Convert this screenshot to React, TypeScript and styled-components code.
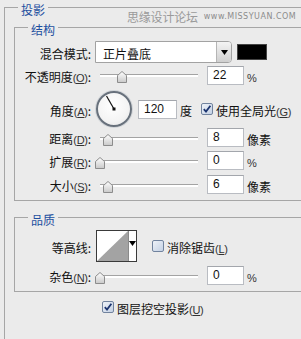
import React from "react";
import styled, { createGlobalStyle, css } from "styled-components";

const Global = createGlobalStyle`
  html, body { margin: 0; padding: 0; background: #ebebeb; }
  body {
    font-family: "Noto Sans CJK SC", "Noto Sans", sans-serif;
    font-size: 12px;
    color: #111;
  }
`;

/* CJK glyphs of the fallback face sit high in their line box: push them down a little */
const cjkText = css`
  line-height: 14px;
  padding-top: 4px;
  white-space: nowrap;
`;

const Panel = styled.div`
  position: relative;
  width: 301px;
  height: 339px;
  overflow: hidden;
  background: #ebebeb;
  padding-top: 7px;
  box-sizing: border-box;
`;

const Watermark = styled.div`
  position: absolute;
  left: 127px;
  top: 10px;
  display: flex;
  align-items: center;
  gap: 6px;
  color: #9a9a9a;
  white-space: nowrap;
`;

const WmCn = styled.span`
  font-size: 12px;
  line-height: 14px;
  letter-spacing: -0.2px;
`;

const WmEn = styled.span`
  font-family: "DejaVu Sans", sans-serif;
  font-size: 8px;
  letter-spacing: 0.5px;
  line-height: 14px;
  color: #8c8c8c;
`;

const OuterBox = styled.section`
  position: relative;
  margin-left: 4px;
  width: 430px;
  height: 400px;
  box-sizing: border-box;
  border: 1px solid #a6a6a6;
  padding: 19px 0 0 9px;
`;

const GroupBox = styled.section<{ $mt?: number; $pt: number; $pb: number }>`
  position: relative;
  width: 420px;
  margin-top: ${(p) => p.$mt ?? 0}px;
  padding: ${(p) => `${p.$pt}px 0 ${p.$pb}px 0`};
  box-sizing: border-box;
  border: 1px solid #a6a6a6;
`;

const Title = styled.h2`
  position: absolute;
  left: 13px;
  top: -4px;
  margin: 0;
  padding: 0 3px;
  background: #ebebeb;
  font-size: 12px;
  font-weight: normal;
  line-height: 12px;
  height: 12px;
  color: #1d4f9f;
`;

const Row = styled.div<{ $h: number; $mt?: number }>`
  display: flex;
  align-items: center;
  height: ${(p) => p.$h}px;
  margin-top: ${(p) => p.$mt ?? 0}px;
`;

const Label = styled.div`
  ${cjkText};
  width: 76px;
  flex: none;
  text-align: right;
  margin-right: 4px;
`;

const Key = styled.span`
  font-family: "Liberation Sans", Arial, sans-serif;
  font-size: 11px;
  letter-spacing: -0.3px;
  color: #333;
`;

const U = styled.span`
  text-decoration: underline;
`;

const Select = styled.div`
  display: flex;
  align-items: stretch;
  width: 137px;
  height: 22px;
  box-sizing: border-box;
  border: 1px solid #a2a2a2;
  border-radius: 0 4px 4px 0;
  background: #fff;
`;

const SelectText = styled.div`
  flex: 1;
  padding: 4px 0 0 7px;
  line-height: 16px;
  font-size: 12px;
`;

const SelectButton = styled.div`
  width: 14px;
  border-left: 1px solid #b5b5b5;
  border-radius: 0 3px 3px 0;
  background: linear-gradient(#f4f4f4, #cfcfcf);
  display: flex;
  align-items: center;
  justify-content: center;
`;

const Swatch = styled.div`
  width: 30px;
  height: 16px;
  margin-left: 5px;
  background: #000;
  box-sizing: border-box;
  border: 1px solid #444;
`;

const SliderBox = styled.div`
  position: relative;
  width: 98px;
  height: 14px;
  margin-left: 5px;
  flex: none;
`;

const Track = styled.div`
  position: absolute;
  left: 0;
  right: 0;
  top: 6px;
  height: 2px;
  border-top: 1px solid #a3a3a3;
  background: #fff;
`;

const ThumbWrap = styled.div`
  position: absolute;
  top: 1px;
  width: 10px;
  height: 12px;
`;

const NumInput = styled.div<{ $w: number; $ml: number }>`
  width: ${(p) => p.$w}px;
  height: 19px;
  margin-left: ${(p) => p.$ml}px;
  box-sizing: border-box;
  border: 1px solid #b9bcc2;
  border-top-color: #a3a6ac;
  background: #fff;
  font-family: "Liberation Sans", Arial, sans-serif;
  font-size: 12px;
  line-height: 17px;
  padding-left: 5px;
  flex: none;
`;

const Unit = styled.div`
  ${cjkText};
  margin-left: 3px;
`;

const Pct = styled.span`
  font-family: "Liberation Sans", Arial, sans-serif;
  font-size: 11px;
  color: #333;
`;

const Dial = styled.div`
  position: relative;
  width: 36px;
  height: 36px;
  margin-left: 1px;
  box-sizing: border-box;
  border-radius: 50%;
  border: 2px solid #68717c;
  background: radial-gradient(circle at 45% 40%, #ffffff 0%, #f4f4f4 60%, #e2e2e2 100%);
  box-shadow: 0 0 0 1px #d0d4d8;
  flex: none;
`;

const DialSvg = styled.svg`
  position: absolute;
  left: -2px;
  top: -2px;
`;

const CheckBox = styled.div<{ $ml: number }>`
  width: 12px;
  height: 12px;
  margin-left: ${(p) => p.$ml}px;
  box-sizing: border-box;
  border: 1px solid #71839e;
  border-radius: 2px;
  background: linear-gradient(135deg, #eef2f8, #c4d1e4);
  display: flex;
  align-items: center;
  justify-content: center;
  flex: none;
`;

const CheckText = styled.div`
  ${cjkText};
  margin-left: 3px;
`;

const Contour = styled.div`
  display: flex;
  width: 41px;
  height: 32px;
  margin-left: 1px;
  box-sizing: border-box;
  border: 1px solid #3a3a3a;
  background: #fff;
  flex: none;
`;

const ContourArrow = styled.div`
  flex: 1;
  display: flex;
  align-items: flex-start;
  justify-content: center;
  padding-top: 10px;
  border-left: 1px solid #8a8a8a;
`;

const BottomRow = styled.div`
  display: flex;
  align-items: center;
  height: 12px;
  margin-top: 9px;
  padding-left: 88px;
`;

const Triangle = () => (
  <svg width="7" height="5" viewBox="0 0 7 5">
    <path d="M0 0H7L3.5 5Z" fill="#000" />
  </svg>
);

const Check = () => (
  <svg width="10" height="10" viewBox="0 0 10 10">
    <path d="M1.8 5.2 L4 7.6 L8.4 1.8" fill="none" stroke="#1c3570" strokeWidth="1.8" />
  </svg>
);

const Thumb = () => (
  <svg width="10" height="12" viewBox="0 0 10 12">
    <defs>
      <linearGradient id="tg" x1="0" y1="0" x2="0" y2="1">
        <stop offset="0" stopColor="#ffffff" />
        <stop offset="1" stopColor="#c9c9c9" />
      </linearGradient>
    </defs>
    <path d="M0.5 4.5 L5 0.5 L9.5 4.5 V11.5 H0.5 Z" fill="url(#tg)" stroke="#8c8c8c" />
  </svg>
);

const Slider = ({ pct }: { pct: number }) => (
  <SliderBox>
    <Track />
    <ThumbWrap style={{ left: `${Math.round(pct * 98) - 5}px` }}>
      <Thumb />
    </ThumbWrap>
  </SliderBox>
);

const Lbl = ({ text, k }: { text: string; k?: string }) => (
  <Label>
    {text}
    {k && (
      <Key>
        (<U>{k}</U>)
      </Key>
    )}
    :
  </Label>
);

export default function App() {
  const angle = 120;
  const r = 15;
  const cx = 18;
  const cy = 18;
  const ex = cx + r * Math.cos((angle * Math.PI) / 180);
  const ey = cy - r * Math.sin((angle * Math.PI) / 180);
  return (
    <Panel>
      <Global />
      <OuterBox>
        <Title>投影</Title>
        <GroupBox $pt={13} $pb={6}>
          <Title>结构</Title>
          <Row $h={22}>
            <Lbl text="混合模式" />
            <Select>
              <SelectText>正片叠底</SelectText>
              <SelectButton>
                <Triangle />
              </SelectButton>
            </Select>
            <Swatch />
          </Row>
          <Row $h={18} $mt={3}>
            <Lbl text="不透明度" k="O" />
            <Slider pct={0.22} />
            <NumInput $w={37} $ml={9}>22</NumInput>
            <Unit>
              <Pct>%</Pct>
            </Unit>
          </Row>
          <Row $h={36} $mt={7}>
            <Lbl text="角度" k="A" />
            <Dial>
              <DialSvg width="36" height="36" viewBox="0 0 36 36">
                <line x1={cx} y1={cy} x2={ex} y2={ey} stroke="#111" strokeWidth="1.2" />
                <rect x={cx - 1.5} y={cy - 1.5} width="3" height="3" fill="#111" />
              </DialSvg>
            </Dial>
            <NumInput $w={39} $ml={6}>120</NumInput>
            <Unit>度</Unit>
            <CheckBox $ml={9}>
              <Check />
            </CheckBox>
            <CheckText>
              使用全局光<Key>(<U>G</U>)</Key>
            </CheckText>
          </Row>
          <Row $h={19} $mt={1}>
            <Lbl text="距离" k="D" />
            <Slider pct={0.08} />
            <NumInput $w={37} $ml={9}>8</NumInput>
            <Unit>像素</Unit>
          </Row>
          <Row $h={19} $mt={4}>
            <Lbl text="扩展" k="R" />
            <Slider pct={0} />
            <NumInput $w={37} $ml={9}>0</NumInput>
            <Unit>
              <Pct>%</Pct>
            </Unit>
          </Row>
          <Row $h={19} $mt={5}>
            <Lbl text="大小" k="S" />
            <Slider pct={0.08} />
            <NumInput $w={37} $ml={9}>6</NumInput>
            <Unit>像素</Unit>
          </Row>
        </GroupBox>
        <GroupBox $mt={16} $pt={12} $pb={6}>
          <Title>品质</Title>
          <Row $h={32}>
            <Lbl text="等高线" />
            <Contour>
              <svg width="31" height="30" viewBox="0 0 31 30">
                <path d="M0 30 L31 0 V30 Z" fill="#a3a3a3" />
              </svg>
              <ContourArrow>
                <Triangle />
              </ContourArrow>
            </Contour>
            <CheckBox $ml={15} />
            <CheckText>
              消除锯齿<Key>(<U>L</U>)</Key>
            </CheckText>
          </Row>
          <Row $h={19} $mt={4}>
            <Lbl text="杂色" k="N" />
            <Slider pct={0} />
            <NumInput $w={37} $ml={9}>0</NumInput>
            <Unit>
              <Pct>%</Pct>
            </Unit>
          </Row>
        </GroupBox>
        <BottomRow>
          <CheckBox $ml={0}>
            <Check />
          </CheckBox>
          <CheckText>
            图层挖空投影<Key>(<U>U</U>)</Key>
          </CheckText>
        </BottomRow>
      </OuterBox>
      <Watermark>
        <WmCn>思缘设计论坛</WmCn>
        <WmEn>www.MISSYUAN.COM</WmEn>
      </Watermark>
    </Panel>
  );
}
